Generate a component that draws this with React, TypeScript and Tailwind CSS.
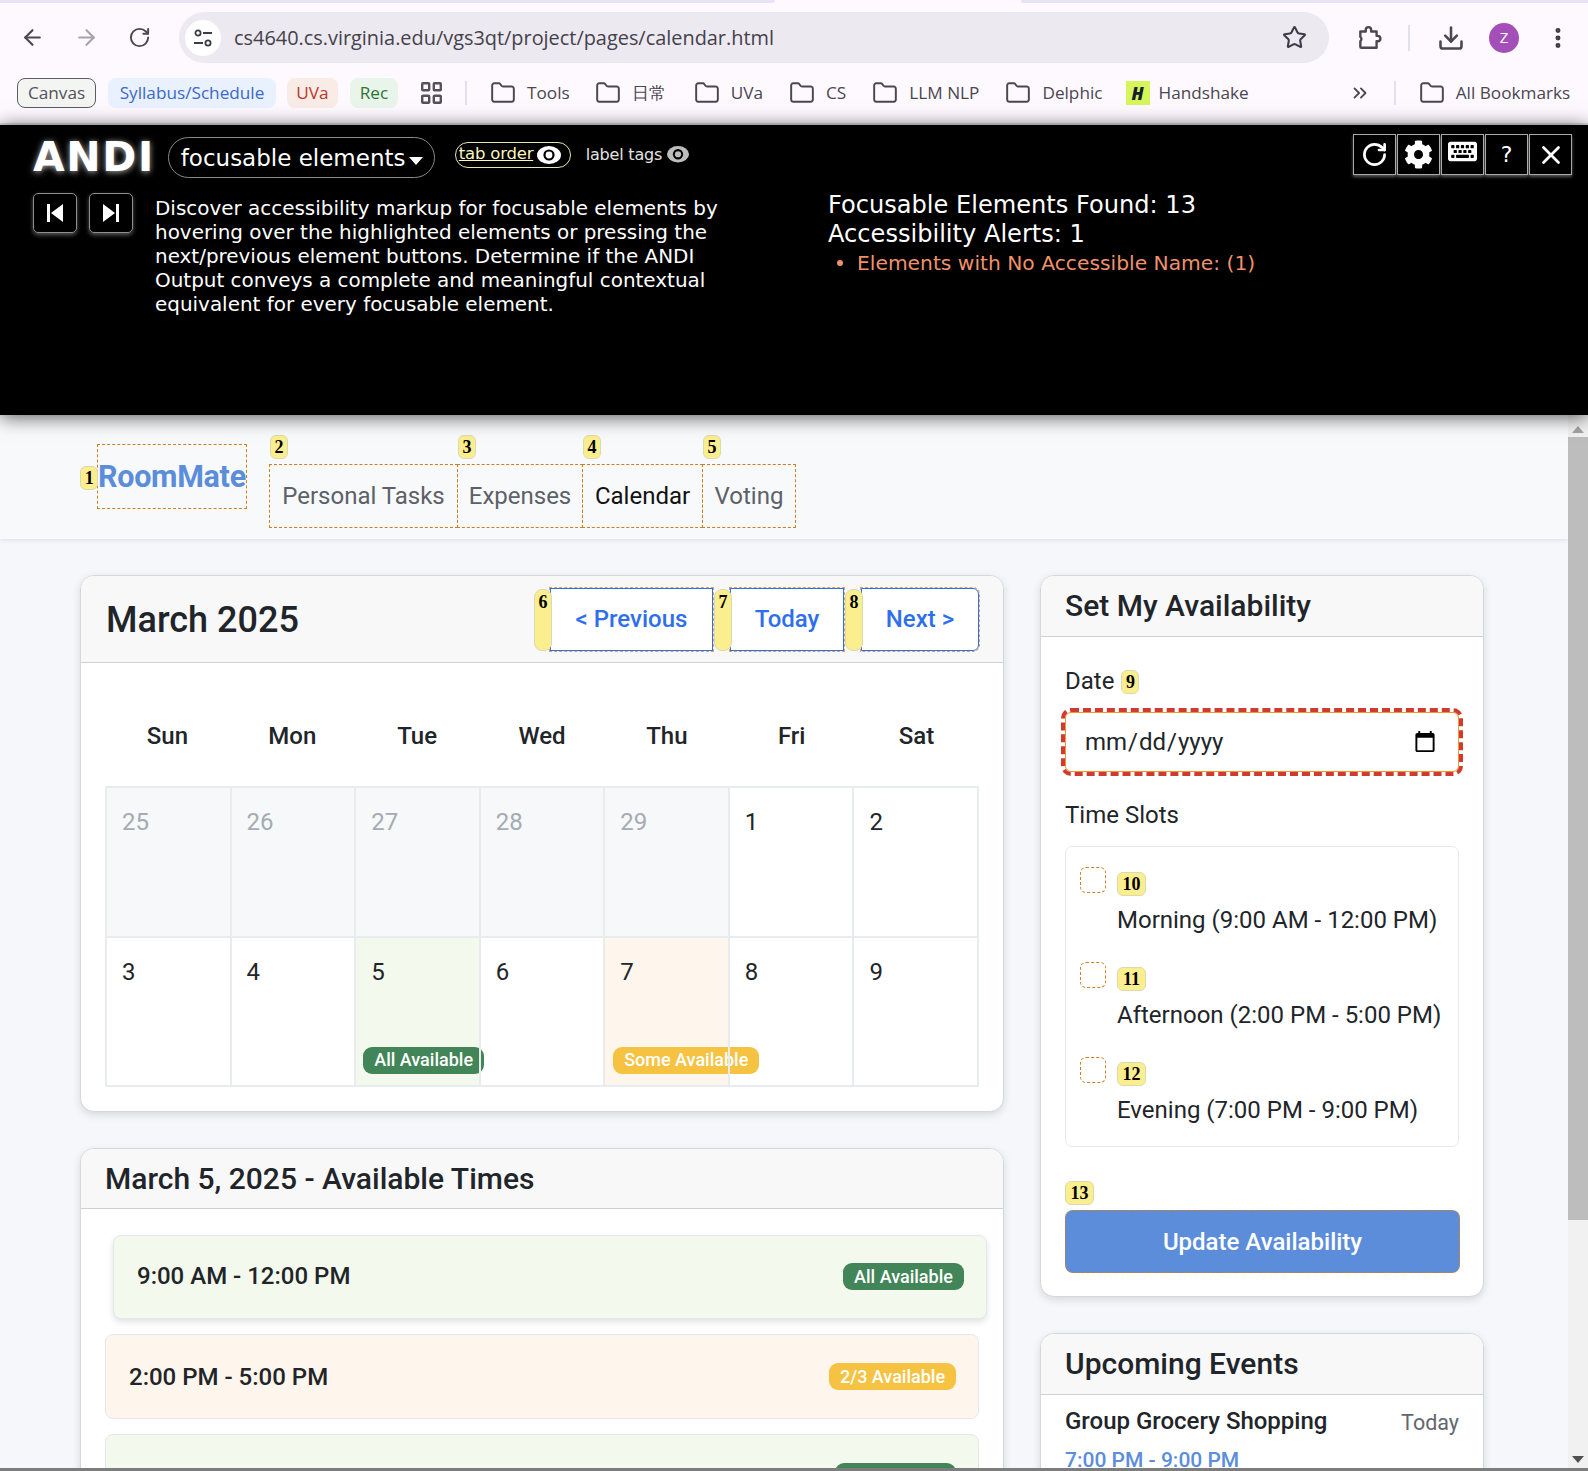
import React from 'react'
import { ArrowLeft, ArrowRight, ChevronsRight, Download, EllipsisVertical, Folder, RotateCw, Star, X } from 'lucide-react'
import { FaCog, FaKeyboard } from 'react-icons/fa'

const folders = [
  { label: 'Tools', cls: 'ml-[23px]' },
  { label: '日常', cls: 'ml-[25px]' },
  { label: 'UVa', cls: 'ml-[28px]' },
  { label: 'CS', cls: 'ml-[26px]' },
  { label: 'LLM NLP', cls: 'ml-[26px]' },
  { label: 'Delphic', cls: 'ml-[26px]' },
]

const previousDays = [25, 26, 27, 28, 29]

function FolderItem({ label, cls }: { label: string; cls: string }) {
  return (
    <div className={`flex items-center gap-[11px] ${cls}`}>
      <Folder className="w-[26px] h-[26px] text-[#4b4650]" strokeWidth={1.8} />
      <span>{label}</span>
    </div>
  )
}

function Badge({ n, cls = '' }: { n: number; cls?: string }) {
  return (
    <span className={`flex items-center justify-center rounded-[6px] border border-[#dcd9b0] bg-[#fbee8e] text-black font-bold text-[18px] leading-none font-['Liberation_Serif',serif] ${cls}`}>
      {n}
    </span>
  )
}

function Eye({ color, size = 24 }: { color: string; size?: number }) {
  return (
    <svg width={size} height={size * 0.75} viewBox="0 0 24 18">
      <ellipse cx="12" cy="9" rx="12" ry="9" fill={color} />
      <circle cx="12" cy="9" r="5.6" fill="#000" />
      <circle cx="12" cy="9" r="3.4" fill={color} />
    </svg>
  )
}

function ChromeBar() {
  return (
    <header className="h-[125px] shrink-0 bg-[#fdf9ff] border-b-2 border-[#dedbe2] font-['Open_Sans',sans-serif] text-[#4b4650]">
      <div className="flex h-[3px]">
        <div className="w-[775px] bg-[#e8e2f7] rounded-br-[8px]" />
        <div className="w-[246px]" />
        <div className="flex-1 bg-[#e8e2f7] rounded-bl-[8px]" />
      </div>
      <div className="flex items-center h-[51px] mt-[9px]">
        <ArrowLeft className="ml-[20px] w-[25px] h-[25px]" strokeWidth={2} />
        <ArrowRight className="ml-[29px] w-[25px] h-[25px] text-[#a5a2aa]" strokeWidth={2} />
        <RotateCw className="ml-[29px] w-[23px] h-[23px]" strokeWidth={2} />
        <div className="ml-[28px] w-[1150px] h-[51px] rounded-full bg-[#ece9f1] flex items-center pl-[6px]">
          <div className="w-[36px] h-[36px] rounded-full bg-white flex items-center justify-center">
            <svg width="20" height="20" viewBox="0 0 20 20" fill="none" stroke="#3f3b45" strokeWidth="1.8">
              <circle cx="5" cy="5" r="2.6" />
              <path d="M10 5h9M1 15h9" />
              <circle cx="15" cy="15" r="2.6" />
            </svg>
          </div>
          <span className="ml-[13px] text-[19.900px] leading-none text-[#45414b] whitespace-nowrap">cs4640.cs.virginia.edu/vgs3qt/project/pages/calendar.html</span>
          <Star className="ml-auto mr-[22px] w-[25px] h-[25px] text-[#3f3b45]" strokeWidth={2} />
        </div>
        <svg className="ml-[27px]" width="26" height="26" viewBox="0 0 24 24" fill="none" stroke="#4b4650" strokeWidth="2.200" strokeLinejoin="round">
          <path d="M4 6h5V4.500a2.500 2.500 0 0 1 5 0V6h5v4h1a2.500 2.500 0 0 1 0 5h-1v6H5a1 1 0 0 1-1-1v-5a2.500 2.500 0 0 0 0-4V6z" />
        </svg>
        <div className="ml-[26px] w-[2px] h-[26px] bg-[#e3dff3]" />
        <Download className="ml-[27px] w-[28px] h-[28px]" strokeWidth={2.2} />
        <div className="ml-[24px] w-[30px] h-[30px] rounded-full bg-[#a44fb7] text-white text-[15px] flex items-center justify-center">Z</div>
        <EllipsisVertical className="ml-[26px] w-[26px] h-[26px] text-[#3f3b45]" strokeWidth={2.6} />
      </div>
      <div className="flex items-center h-[30px] mt-[15px] pl-[17px] text-[17.2px] leading-none whitespace-nowrap">
        <span className="w-[79px] h-[30px] rounded-[8px] border border-[#5f5b63] bg-[#f3f5f3] flex items-center justify-center text-[#555159]">Canvas</span>
        <span className="ml-[12px] w-[168px] h-[30px] rounded-[8px] bg-[#e8f1fd] flex items-center justify-center text-[#3d68c9]">Syllabus/Schedule</span>
        <span className="ml-[11px] w-[51px] h-[30px] rounded-[8px] bg-[#f9ebe5] flex items-center justify-center text-[#b8382a]">UVa</span>
        <span className="ml-[12px] w-[48px] h-[30px] rounded-[8px] bg-[#e9f4ea] flex items-center justify-center text-[#2b7436]">Rec</span>
        <svg className="ml-[23px]" width="21" height="22" viewBox="0 0 21 22" fill="none" stroke="#55515a" strokeWidth="2.400">
          <rect x="1.200" y="1.200" width="7" height="7" rx="0.800" />
          <rect x="12.800" y="1.200" width="7" height="7" rx="0.800" />
          <rect x="1.200" y="13.800" width="7" height="7" rx="0.800" />
          <rect x="12.800" y="13.800" width="7" height="7" rx="0.800" />
        </svg>
        <div className="ml-[23px] w-[2px] h-[24px] bg-[#e3dff3]" />
        {folders.map(f => <FolderItem key={f.label} label={f.label} cls={f.cls} />)}
        <div className="ml-[23px] w-[24px] h-[24px] bg-[#d6f55b] flex items-center justify-center">
          <span className="text-[#14202b] text-[17px] font-black italic leading-none">H</span>
        </div>
        <span className="ml-[9px]">Handshake</span>
        <ChevronsRight className="ml-[100px] w-[22px] h-[22px]" strokeWidth={2} />
        <div className="ml-[23px] w-[2px] h-[24px] bg-[#e3dff3]" />
        <FolderItem label="All Bookmarks" cls="ml-[23px]" />
      </div>
    </header>
  )
}

function AndiBar() {
  const tools = [
    <RotateCw key="r" className="w-[27px] h-[27px]" strokeWidth={2.4} />,
    <FaCog key="c" className="w-[29px] h-[29px]" />,
    <FaKeyboard key="k" className="w-[29px] h-[29px] -mt-[6px]" />,
    <span key="q" className="text-[22px] leading-none">?</span>,
    <X key="x" className="w-[30px] h-[30px]" strokeWidth={2.2} />,
  ]
  return (
    <section className="relative z-10 h-[290px] shrink-0 bg-black text-white font-['DejaVu_Sans',sans-serif] shadow-[0_2px_18px_rgba(0,0,0,0.65)]">
      <div className="flex items-center h-[68px] pl-[33px] pr-[16px]">
        <span className="-mt-[3px] text-[41px] font-bold leading-none tracking-[1.6px] [text-shadow:0_1px_6px_rgba(255,255,255,0.7)]">ANDI</span>
        <div className="ml-[13px] -mt-[3px] w-[267px] h-[41px] rounded-full border border-[#8a8a8a] flex items-center pl-[12px] pt-[2px] text-[23px] leading-none whitespace-nowrap">
          focusable elements
          <span className="ml-[4px] mt-[4px] border-x-[7px] border-x-transparent border-t-[8px] border-t-white" />
        </div>
        <div className="ml-[20px] -mt-[9px] w-[116px] h-[26px] rounded-full border border-[#e9e5b0] flex items-center pl-[3px] text-[16.500px] leading-none tracking-[-0.2px] text-[#fbf6bf] whitespace-nowrap">
          <span className="underline">tab order</span>
          <span className="ml-[4px]"><Eye color="#fff" /></span>
        </div>
        <span className="ml-[15px] -mt-[9px] text-[16px] leading-none tracking-[-0.2px] text-[#e4e4e4] whitespace-nowrap">label tags</span>
        <span className="ml-[5px] -mt-[9px]"><Eye color="#bdbdbd" size={22} /></span>
        <div className="ml-auto flex -mt-[9px] gap-[1px]">
          {tools.map((t, i) => (
            <div key={i} className="w-[43px] h-[41px] border border-[#a8a8a8] shadow-[0_2px_3px_rgba(255,255,255,0.35)] flex items-center justify-center">{t}</div>
          ))}
        </div>
      </div>
      <div className="flex pl-[33px]">
        <div className="flex gap-[12px]">
          <button className="w-[44px] h-[40px] rounded-[5px] border border-[#8f8f8f] shadow-[0_2px_4px_rgba(255,255,255,0.35)] flex items-center justify-center">
            <svg width="18" height="18" viewBox="0 0 18 18" fill="#fff"><rect x="1" y="0" width="3" height="18" /><path d="M17 0v18L5 9z" /></svg>
          </button>
          <button className="w-[44px] h-[40px] rounded-[5px] border border-[#8f8f8f] shadow-[0_2px_4px_rgba(255,255,255,0.35)] flex items-center justify-center">
            <svg width="18" height="18" viewBox="0 0 18 18" fill="#fff"><path d="M1 0v18l12-9z" /><rect x="14" y="0" width="3" height="18" /></svg>
          </button>
        </div>
        <p className="ml-[22px] w-[590px] text-[19.960px] leading-[24px] mt-[3px]">
          Discover accessibility markup for focusable elements by hovering over the highlighted elements or pressing the next/previous element buttons. Determine if the ANDI Output conveys a complete and meaningful contextual equivalent for every focusable element.
        </p>
        <div className="ml-[83px] -mt-[2px]">
          <p className="text-[24.100px] leading-[29px]">Focusable Elements Found: 13</p>
          <p className="text-[24.100px] leading-[29px]">Accessibility Alerts: 1</p>
          <p className="ml-[9px] text-[20.250px] leading-[28px] text-[#f0916a] flex items-center">
            <span className="w-[6px] h-[6px] rounded-full bg-[#f0916a] mr-[14px]" />
            Elements with No Accessible Name: (1)
          </p>
        </div>
      </div>
    </section>
  )
}

function NavBar() {
  const links = [
    { n: 2, label: 'Personal Tasks', cls: 'w-[189px] text-[#5c6167]' },
    { n: 3, label: 'Expenses', cls: 'w-[126px] text-[#5c6167]' },
    { n: 4, label: 'Calendar', cls: 'w-[121px] text-[#111]' },
    { n: 5, label: 'Voting', cls: 'w-[94px] text-[#5c6167]' },
  ]
  return (
    <nav className="h-[124px] bg-[#f8f9fb] shadow-[0_1px_5px_rgba(0,0,0,0.1)] flex items-start pl-[97px] relative">
      <div className="relative mt-[29px] w-[150px] h-[65px] border border-dashed border-[#cf7f1f] text-[30.500px] font-bold text-[#5b8ddb] leading-[64px] tracking-[-0.3px] whitespace-nowrap">
        <Badge n={1} cls="absolute -left-[18px] top-[21px] w-[18px] h-[24px]" />
        RoomMate
      </div>
      <div className="flex ml-[22px] mt-[49px]">
        {links.map(l => (
          <div key={l.n} className={`relative h-[64px] -mr-px border border-dashed border-[#cf7f1f] flex items-center justify-center text-[24px] ${l.cls}`}>
            <Badge n={l.n} cls="absolute left-0 -top-[30px] w-[18px] h-[24px]" />
            {l.label}
          </div>
        ))}
      </div>
    </nav>
  )
}

function CalCell({ day, bg = '', muted = false, badge }: { day: number; bg?: string; muted?: boolean; badge?: React.ReactNode }) {
  return (
    <div className={`relative h-[149.500px] border-l-2 border-t-2 border-[#e9ecef] pt-[18px] pl-[15px] text-[24px] leading-[32px] ${muted ? 'text-[#a4abb2] bg-[#f7f8fa]' : 'text-[#212529]'} ${bg}`}>
      {day}
      {badge}
    </div>
  )
}

function StatusPill({ children, color, cls = '' }: { children: React.ReactNode; color: string; cls?: string }) {
  return (
    <span className={`h-[27px] rounded-[9px] flex items-center justify-center text-[18px] font-medium text-white whitespace-nowrap ${color} ${cls}`}>{children}</span>
  )
}

function CalendarCard() {
  return (
    <div className="bg-white border border-[#d5d7da] rounded-[14px] shadow-[0_3px_8px_rgba(0,0,0,0.12)] overflow-hidden">
      <div className="relative h-[87px] bg-[#f8f8f9] border-b border-[#cfd1d4] flex items-center pl-[25px] pr-[24px]">
        <h2 className="mt-[2px] text-[36px] font-medium text-[#212529]">March 2025</h2>
        <div className="ml-auto flex">
          <div className="relative ml-[17px] w-[163px] h-[63px] border border-[#2f6fed] outline-1 outline-dashed outline-[#cf7f1f]/70 bg-white flex items-center justify-center text-[24px] font-medium text-[#2f6fed]">
            <Badge n={6} cls="absolute -left-[17px] top-0 w-[18px] h-[62px] !items-start pt-[3px] rounded-[8px]" />
            &lt; Previous
          </div>
          <div className="relative ml-[17px] w-[114px] h-[63px] border border-[#2f6fed] outline-1 outline-dashed outline-[#cf7f1f]/70 bg-white flex items-center justify-center text-[24px] font-medium text-[#2f6fed]">
            <Badge n={7} cls="absolute -left-[17px] top-0 w-[18px] h-[62px] !items-start pt-[3px] rounded-[8px]" />
            Today
          </div>
          <div className="relative ml-[17px] w-[118px] h-[63px] border border-[#2f6fed] rounded-r-[6px] outline-1 outline-dashed outline-[#cf7f1f]/70 bg-white flex items-center justify-center text-[24px] font-medium text-[#2f6fed]">
            <Badge n={8} cls="absolute -left-[17px] top-0 w-[18px] h-[62px] !items-start pt-[3px] rounded-[8px]" />
            Next &gt;
          </div>
        </div>
      </div>
      <div className="px-[24px] pb-[24px]">
        <div className="grid grid-cols-7 h-[123px] items-end pb-[34px] text-center text-[24px] font-medium leading-[32px] text-[#212529]">
          {['Sun', 'Mon', 'Tue', 'Wed', 'Thu', 'Fri', 'Sat'].map(d => <div key={d}>{d}</div>)}
        </div>
        <div className="grid grid-cols-7 border-r-2 border-b-2 border-[#e9ecef]">
          {previousDays.map(d => <CalCell key={d} day={d} muted />)}
          <CalCell day={1} />
          <CalCell day={2} />
          <CalCell day={3} />
          <CalCell day={4} />
          <CalCell day={5} bg="bg-[#f3f9ec]" badge={<StatusPill color="bg-[#418558]" cls="absolute left-[7px] top-[109px] w-[121px]">All Available</StatusPill>} />
          <CalCell day={6} />
          <CalCell day={7} bg="bg-[#fef5ec]" badge={<StatusPill color="bg-[#f5c242]" cls="absolute left-[8px] top-[109px] w-[146px]">Some Available</StatusPill>} />
          <CalCell day={8} />
          <CalCell day={9} />
        </div>
      </div>
    </div>
  )
}

function TimesCard() {
  return (
    <div className="mt-[36px] bg-white border border-[#d5d7da] rounded-[14px] shadow-[0_3px_8px_rgba(0,0,0,0.12)] overflow-hidden">
      <div className="h-[60px] bg-[#f8f8f9] border-b border-[#cfd1d4] flex items-center pl-[24px]">
        <h3 className="text-[30px] font-medium text-[#212529]">March 5, 2025 - Available Times</h3>
      </div>
      <div className="px-[24px] pt-[26px] pb-[24px] flex flex-col gap-[15px]">
        <div className="translate-x-2 h-[84px] pb-[2px] rounded-[8px] border border-[#e4e8ec] bg-[#f3f9ec] shadow-[0_3px_6px_rgba(0,0,0,0.12)] flex items-center justify-between pl-[23px] pr-[22px]">
          <span className="text-[24px] font-medium text-[#212529]">9:00 AM - 12:00 PM</span>
          <StatusPill color="bg-[#418558]" cls="w-[121px]">All Available</StatusPill>
        </div>
        <div className="h-[85px] rounded-[8px] border border-[#e4e8ec] bg-[#fef5ec] flex items-center justify-between pl-[23px] pr-[22px]">
          <span className="text-[24px] font-medium text-[#212529]">2:00 PM - 5:00 PM</span>
          <StatusPill color="bg-[#f5c242]" cls="w-[127px]">2/3 Available</StatusPill>
        </div>
        <div className="h-[85px] rounded-[8px] border border-[#e4e8ec] bg-[#f3f9ec] flex items-center justify-between pl-[23px] pr-[22px]">
          <span className="text-[24px] font-medium text-[#212529]">7:00 PM - 9:00 PM</span>
          <StatusPill color="bg-[#418558]" cls="w-[121px]">All Available</StatusPill>
        </div>
      </div>
    </div>
  )
}

function Slot({ n, label, cls = '' }: { n: number; label: string; cls?: string }) {
  return (
    <div className={cls}>
      <div className="flex items-start">
        <input type="checkbox" aria-label={label} className="appearance-none w-[26px] h-[26px] rounded-[6px] border border-dashed border-[#cf7f1f] bg-white" />
        <Badge n={n} cls="ml-[11px] mt-[5px] w-[29px] h-[24px]" />
      </div>
      <label className="block mt-[9px] ml-[37px] text-[24px] leading-[30px] text-[#212529] whitespace-nowrap">{label}</label>
    </div>
  )
}

function AvailabilityCard() {
  return (
    <div className="bg-white border border-[#d5d7da] rounded-[14px] shadow-[0_3px_8px_rgba(0,0,0,0.12)] overflow-hidden">
      <div className="h-[61px] bg-[#f8f8f9] border-b border-[#cfd1d4] flex items-center pl-[24px]">
        <h3 className="-mt-[1px] text-[30px] font-medium text-[#212529]">Set My Availability</h3>
      </div>
      <div className="px-[24px] pt-[29px] pb-[23px]">
        <div className="flex items-center h-[30px] text-[24px] text-[#212529]">
          Date
          <Badge n={9} cls="ml-[7px] mt-[2px] w-[18px] h-[24px]" />
        </div>
        <input
          type="date"
          className="mt-[16px] block w-[394px] h-[60px] rounded-[6px] border border-[#e89a2c] bg-white pl-[18px] pr-[19px] text-[24px] text-[#212529] outline-[4px] outline-dashed outline-offset-0 outline-[#d13a2f]"
        />
        <div className="mt-[28px] h-[30px] text-[24px] leading-[30px] text-[#212529]">Time Slots</div>
        <div className="mt-[16px] h-[301px] rounded-[7px] border border-[#e6e9ee] pl-[14px] pt-[20px]">
          <Slot n={10} label="Morning (9:00 AM - 12:00 PM)" />
          <Slot n={11} label="Afternoon (2:00 PM - 5:00 PM)" cls="mt-[27px]" />
          <Slot n={12} label="Evening (7:00 PM - 9:00 PM)" cls="mt-[27px]" />
        </div>
        <Badge n={13} cls="mt-[34px] w-[29px] h-[24px]" />
        <button className="mt-[5px] w-[395px] h-[63px] rounded-[8px] border border-dashed border-[#cf7f1f] bg-[#5b8ddb] text-white text-[24px] font-medium">Update Availability</button>
      </div>
    </div>
  )
}

function UpcomingCard() {
  return (
    <div className="mt-[36px] bg-white border border-[#d5d7da] rounded-[14px] shadow-[0_3px_8px_rgba(0,0,0,0.12)] overflow-hidden">
      <div className="h-[61px] bg-[#f8f8f9] border-b border-[#cfd1d4] flex items-center pl-[24px]">
        <h3 className="-mt-[1px] text-[30px] font-medium text-[#212529]">Upcoming Events</h3>
      </div>
      <div className="px-[24px] pt-[7px]">
        <div className="flex justify-between items-center">
          <span className="text-[24px] font-medium leading-[32px] text-[#212529]">Group Grocery Shopping</span>
          <span className="mt-[5px] text-[21.500px] text-[#62676d]">Today</span>
        </div>
        <div className="mt-[7px] text-[21px] font-medium leading-[28px] text-[#5b8ddb]">7:00 PM - 9:00 PM</div>
        <div className="h-[60px]" />
      </div>
    </div>
  )
}

export default function App() {
  return (
    <div className="w-[1588px] h-[1471px] overflow-hidden flex flex-col bg-[#f5f7fb] font-['Roboto',sans-serif]">
      <ChromeBar />
      <AndiBar />
      <div className="flex-1 min-h-0 flex">
        <main className="flex-1 min-w-0 overflow-hidden">
          <NavBar />
          <div className="flex pt-[36px] pl-[80px] pr-[84px] gap-[36px]">
            <div className="w-[924px] shrink-0">
              <CalendarCard />
              <TimesCard />
            </div>
            <div className="w-[444px] shrink-0">
              <AvailabilityCard />
              <UpcomingCard />
            </div>
          </div>
        </main>
        <aside className="w-[20px] shrink-0 bg-[#f1f1f1] flex flex-col items-center">
          <span className="mt-[11px] border-x-[6px] border-x-transparent border-b-[7px] border-b-[#a3a3a3]" />
          <div className="mt-[4px] w-full h-[783px] bg-[#bdbdbd]" />
          <span className="mt-auto mb-[5px] border-x-[6px] border-x-transparent border-t-[7px] border-t-[#505050]" />
        </aside>
      </div>
      <div className="h-[3px] shrink-0 bg-[#7d7d7d]" />
    </div>
  )
}
